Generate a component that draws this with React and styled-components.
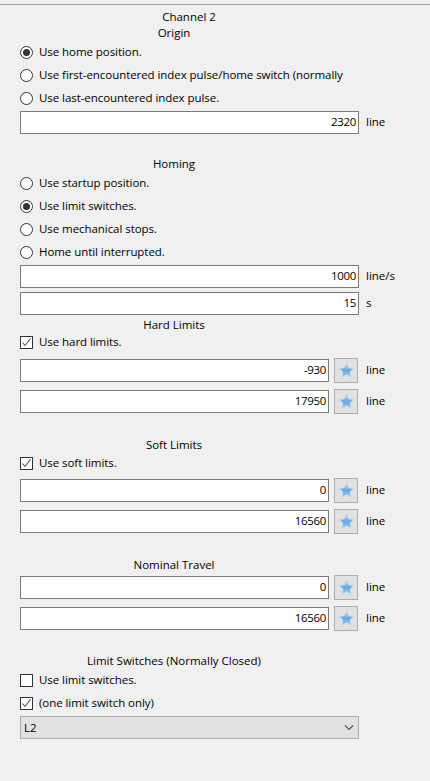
import React from 'react';
import styled, { createGlobalStyle } from 'styled-components';

const GlobalStyle = createGlobalStyle`
  html, body {
    margin: 0;
    padding: 0;
    background: #f0f0f0;
  }
  body {
    font-family: "Open Sans", "Noto Sans", sans-serif;
    font-size: 11.5px;
    color: #000;
  }
`;

const Page = styled.div`
  width: 430px;
  height: 781px;
  overflow: hidden;
  padding-top: 4px;
  box-sizing: border-box;
  background: #f0f0f0;
`;

const TopRule = styled.div`
  height: 1px;
  background: #a0a0a8;
`;

const Section = styled.section`
  margin-top: ${(p) => p.$top || 0}px;
`;

const Heading = styled.div`
  width: 348px;
  height: 16px;
  line-height: 16px;
  box-sizing: border-box;
  padding-left: ${(p) => p.$shift || 0}px;
  text-align: center;
  white-space: nowrap;
`;

const OptionRow = styled.label`
  display: flex;
  align-items: center;
  gap: 6px;
  height: ${(p) => (p.$short ? 18 : 23)}px;
  margin-top: ${(p) => p.$top || 0}px;
  padding-left: 20px;
  white-space: nowrap;
`;

const OptionText = styled.span`
  padding-bottom: 2px;
  letter-spacing: -0.06px;
`;

const RadioMark = styled.span`
  width: 13px;
  height: 13px;
  box-sizing: border-box;
  flex: none;
  display: flex;
  align-items: center;
  justify-content: center;
  border: 1px solid #333;
  border-radius: 50%;
  background: #fff;

  &::after {
    content: '';
    width: 7px;
    height: 7px;
    border-radius: 50%;
    background: ${(p) => (p.$on ? '#333' : 'transparent')};
  }
`;

const CheckMark = styled.span`
  width: 13px;
  height: 13px;
  box-sizing: border-box;
  flex: none;
  display: flex;
  align-items: center;
  justify-content: center;
  border: 1px solid #333;
  background: #fff;
`;

const FieldRow = styled.div`
  display: flex;
  align-items: center;
  height: ${(p) => (p.$star ? 25 : 23)}px;
  margin-top: ${(p) => p.$top || 0}px;
  padding-left: 20px;
`;

const NumberInput = styled.input`
  width: ${(p) => (p.$star ? 309 : 339)}px;
  height: 23px;
  box-sizing: border-box;
  padding: 0 2px 2px 0;
  border: 1px solid #7a7a7a;
  border-radius: 0;
  outline: none;
  background: #fff;
  color: #000;
  font: inherit;
  letter-spacing: -0.35px;
  text-align: right;
`;

const StarButton = styled.button`
  width: 24px;
  height: 25px;
  box-sizing: border-box;
  flex: none;
  display: flex;
  align-items: center;
  justify-content: center;
  margin-left: 5px;
  padding: 0;
  border: 1px solid #adadad;
  background: #e1e1e1;
`;

const Unit = styled.span`
  margin-left: ${(p) => (p.$star ? 8 : 7)}px;
  padding-bottom: 2px;
`;

const SelectBox = styled.div`
  display: flex;
  align-items: center;
  justify-content: space-between;
  width: 339px;
  height: 23px;
  box-sizing: border-box;
  margin: 1px 0 0 20px;
  padding: 0 4px 0 3px;
  border: 1px solid #adadad;
  background: #e1e1e1;
`;

const Radio = ({ on, children }) => (
  <OptionRow>
    <RadioMark $on={on} />
    <OptionText>{children}</OptionText>
  </OptionRow>
);

const Check = ({ on, short, top, children }) => (
  <OptionRow $short={short} $top={top}>
    <CheckMark>
      {on && (
        <svg width="11" height="11" viewBox="0 0 11 11">
          <path d="M1.5 5.5 L4 8.5 L9.5 1.5" fill="none" stroke="#555" strokeWidth="1.1" />
        </svg>
      )}
    </CheckMark>
    <OptionText>{children}</OptionText>
  </OptionRow>
);

const Star = () => (
  <svg width="17" height="17" viewBox="0 0 18 18">
    <defs>
      <linearGradient id="starFill" x1="0" y1="0" x2="0" y2="1">
        <stop offset="0" stopColor="#c4dff5" />
        <stop offset="0.5" stopColor="#6aa8e0" />
        <stop offset="1" stopColor="#9cc6ea" />
      </linearGradient>
    </defs>
    <path
      d="M9 1.2 L11.3 6.2 L16.8 6.9 L12.8 10.6 L13.9 16.2 L9 13.4 L4.1 16.2 L5.2 10.6 L1.2 6.9 L6.7 6.2 Z"
      fill="url(#starFill)"
      stroke="#c2daee"
      strokeWidth="0.9"
      strokeLinejoin="round"
    />
  </svg>
);

const Field = ({ value, unit, top }) => (
  <FieldRow $top={top}>
    <NumberInput defaultValue={value} readOnly />
    <Unit>{unit}</Unit>
  </FieldRow>
);

const StarField = ({ value, top }) => (
  <FieldRow $star $top={top}>
    <NumberInput $star defaultValue={value} readOnly />
    <StarButton type="button">
      <Star />
    </StarButton>
    <Unit $star>line</Unit>
  </FieldRow>
);

const App = () => (
  <Page>
    <GlobalStyle />
    <TopRule />

    <Section $top={4}>
      <Heading $shift={30}>Channel 2</Heading>
      <Heading>Origin</Heading>
      <Radio on>Use home position.</Radio>
      <Radio>Use first-encountered index pulse/home switch (normally</Radio>
      <Radio>Use last-encountered index pulse.</Radio>
      <Field value="2320" unit="line" top={1} />
    </Section>

    <Section $top={22}>
      <Heading>Homing</Heading>
      <Radio>Use startup position.</Radio>
      <Radio on>Use limit switches.</Radio>
      <Radio>Use mechanical stops.</Radio>
      <Radio>Home until interrupted.</Radio>
      <Field value="1000" unit="line/s" top={1} />
      <Field value="15" unit="s" top={4} />
    </Section>

    <Section $top={2}>
      <Heading>Hard Limits</Heading>
      <Check on short>Use hard limits.</Check>
      <StarField value="-930" top={7} />
      <StarField value="17950" top={6} />
    </Section>

    <Section $top={23}>
      <Heading>Soft Limits</Heading>
      <Check on short top={1}>Use soft limits.</Check>
      <StarField value="0" top={6} />
      <StarField value="16560" top={6} />
    </Section>

    <Section $top={23}>
      <Heading>Nominal Travel</Heading>
      <StarField value="0" top={2} />
      <StarField value="16560" top={6} />
    </Section>

    <Section $top={22}>
      <Heading>Limit Switches (Normally Closed)</Heading>
      <Check>Use limit switches.</Check>
      <Check on>(one limit switch only)</Check>
      <SelectBox>
        <span>L2</span>
        <svg width="10" height="7" viewBox="0 0 10 7">
          <path d="M1 1.5 L5 5.5 L9 1.5" fill="none" stroke="#555" strokeWidth="1.1" />
        </svg>
      </SelectBox>
    </Section>
  </Page>
);

export default App;
